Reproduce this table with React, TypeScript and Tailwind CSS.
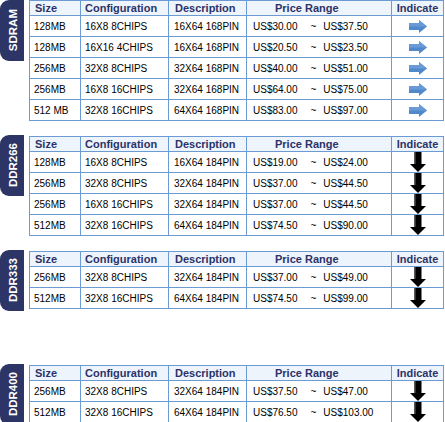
import React from 'react'

type Row = [string, string, string, string, string]

interface Section {
  name: string
  arrow: 'right' | 'down'
  rows: Row[]
  gap: string
}

const sections: Section[] = [
  {
    name: 'SDRAM',
    arrow: 'right',
    gap: '',
    rows: [
      ['128MB', '16X8 8CHIPS', '16X64 168PIN', 'US$30.00', 'US$37.50'],
      ['128MB', '16X16 4CHIPS', '16X64 168PIN', 'US$20.50', 'US$23.50'],
      ['256MB', '32X8 8CHIPS', '32X64 168PIN', 'US$40.00', 'US$51.00'],
      ['256MB', '16X8 16CHIPS', '32X64 168PIN', 'US$64.00', 'US$75.00'],
      ['512 MB', '32X8 16CHIPS', '64X64 168PIN', 'US$83.00', 'US$97.00'],
    ],
  },
  {
    name: 'DDR266',
    arrow: 'down',
    gap: 'mt-[15px]',
    rows: [
      ['128MB', '16X8 8CHIPS', '16X64 184PIN', 'US$19.00', 'US$24.00'],
      ['256MB', '32X8 8CHIPS', '32X64 184PIN', 'US$37.00', 'US$44.50'],
      ['256MB', '16X8 16CHIPS', '32X64 184PIN', 'US$37.00', 'US$44.50'],
      ['512MB', '32X8 16CHIPS', '64X64 184PIN', 'US$74.50', 'US$90.00'],
    ],
  },
  {
    name: 'DDR333',
    arrow: 'down',
    gap: 'mt-[15px]',
    rows: [
      ['256MB', '32X8 8CHIPS', '32X64 184PIN', 'US$37.00', 'US$49.00'],
      ['512MB', '32X8 16CHIPS', '64X64 184PIN', 'US$74.50', 'US$99.00'],
    ],
  },
  {
    name: 'DDR400',
    arrow: 'down',
    gap: 'mt-[54px]',
    rows: [
      ['256MB', '32X8 8CHIPS', '32X64 184PIN', 'US$37.50', 'US$47.00'],
      ['512MB', '32X8 16CHIPS', '64X64 184PIN', 'US$76.50', 'US$103.00'],
    ],
  },
]

function RightArrow() {
  return (
    <svg width="18" height="13" viewBox="0 0 18 13">
      <polygon points="0,3 10,3 10,0 18,6.5 10,13 10,10 0,10" fill="#5089cb" />
      <polygon points="0,3 10,3 10,0 18,6.5 0,6.5" fill="#6a9ad6" />
    </svg>
  )
}

function DownArrow() {
  return (
    <svg width="16" height="20" viewBox="0 0 16 20">
      <polygon points="4.5,0 11.5,0 11.5,12 16,12 8,20 0,12 4.5,12" fill="#000" />
      <polygon points="4.5,0 6,0 6,12 4.5,12" fill="#333" />
    </svg>
  )
}

function Tab({ name, first }: { name: string; first: boolean }) {
  return (
    <div
      className={`w-[24px] h-[61px] shrink-0 rounded-l-[9px] bg-[#2d3566] flex items-center justify-center pl-[3px] ${
        first ? '' : '-mt-px'
      }`}
    >
      <span className="[writing-mode:vertical-rl] rotate-180 text-white font-bold text-[11.5px] leading-none">
        {name}
      </span>
    </div>
  )
}

function PriceTable({ section }: { section: Section }) {
  const head = 'bg-[#eef4fc] h-[14px] flex items-center font-bold text-[11px] text-[#2b3368]'
  const cell = 'bg-white h-[20px] flex items-center text-[10px] text-black'
  return (
    <div className="ml-[5px] grid grid-cols-[50px_87px_77px_144px_51px] gap-px bg-[#6b9bd2] border border-[#6b9bd2]">
      <div className={`${head} pl-[5px]`}>Size</div>
      <div className={`${head} pl-[4px]`}>Configuration</div>
      <div className={`${head} pl-[6px]`}>Description</div>
      <div className={`${head} pl-[28px]`}>Price Range</div>
      <div className={`${head} justify-center`}>Indicate</div>
      {section.rows.map((r, i) => (
        <React.Fragment key={i}>
          <div className={`${cell} pl-[4px]`}>{r[0]}</div>
          <div className={`${cell} pl-[4px]`}>{r[1]}</div>
          <div className={`${cell} pl-[5px]`}>{r[2]}</div>
          <div className={`${cell} pl-[6px] whitespace-pre`}>
            <span>{r[3]}</span>
            <span className="ml-[13px]">~</span>
            <span className="ml-[7px]">{r[4]}</span>
          </div>
          <div className={`${cell} justify-center`}>
            {section.arrow === 'right' ? <RightArrow /> : <DownArrow />}
          </div>
        </React.Fragment>
      ))}
    </div>
  )
}

export default function App() {
  return (
    <div className="w-[445px] h-[422px] overflow-hidden bg-white font-['Liberation_Sans',Arial,sans-serif]">
      {sections.map((s, i) => (
        <div key={s.name} className={`flex items-start ${s.gap}`}>
          <Tab name={s.name} first={i === 0} />
          <PriceTable section={s} />
        </div>
      ))}
    </div>
  )
}
